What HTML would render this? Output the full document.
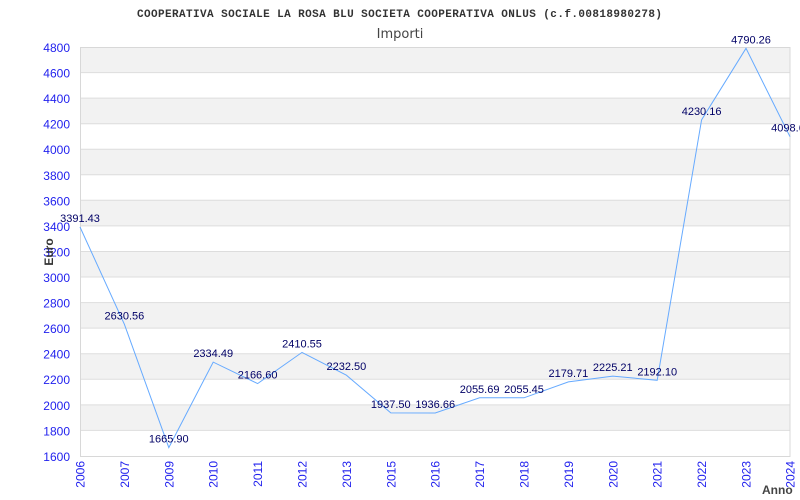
<!DOCTYPE html>
<html><head><meta charset="utf-8"><style>
html,body{margin:0;padding:0;background:#fff;width:800px;height:500px;overflow:hidden}
svg{display:block}
</style></head><body>
<svg width="800" height="500" xmlns="http://www.w3.org/2000/svg">
<text x="137" y="17" textLength="525" lengthAdjust="spacing" font-family="Liberation Mono, monospace" font-weight="bold" font-size="11" fill="#333">COOPERATIVA SOCIALE LA ROSA BLU SOCIETA COOPERATIVA ONLUS (c.f.00818980278)</text>
<text x="400" y="38" text-anchor="middle" font-family="DejaVu Sans, sans-serif" font-size="13" fill="#444">Importi</text>
<g fill="#f2f2f2">
<rect x="80" y="47" width="710" height="25.56"/>
<rect x="80" y="98.1" width="710" height="25.56"/>
<rect x="80" y="149.2" width="710" height="25.56"/>
<rect x="80" y="200.3" width="710" height="25.56"/>
<rect x="80" y="251.5" width="710" height="25.56"/>
<rect x="80" y="302.6" width="710" height="25.56"/>
<rect x="80" y="353.7" width="710" height="25.56"/>
<rect x="80" y="404.9" width="710" height="25.56"/>
</g>
<g stroke="#ddd" stroke-width="1">
<line x1="80" x2="790" y1="72.6" y2="72.6"/><line x1="80" x2="790" y1="98.1" y2="98.1"/>
<line x1="80" x2="790" y1="123.7" y2="123.7"/><line x1="80" x2="790" y1="149.2" y2="149.2"/>
<line x1="80" x2="790" y1="174.8" y2="174.8"/><line x1="80" x2="790" y1="200.3" y2="200.3"/>
<line x1="80" x2="790" y1="225.9" y2="225.9"/><line x1="80" x2="790" y1="251.5" y2="251.5"/>
<line x1="80" x2="790" y1="277" y2="277"/><line x1="80" x2="790" y1="302.6" y2="302.6"/>
<line x1="80" x2="790" y1="328.1" y2="328.1"/><line x1="80" x2="790" y1="353.7" y2="353.7"/>
<line x1="80" x2="790" y1="379.2" y2="379.2"/><line x1="80" x2="790" y1="404.9" y2="404.9"/>
<line x1="80" x2="790" y1="430.4" y2="430.4"/>
</g>
<rect x="80.5" y="47.5" width="709.5" height="409" fill="none" stroke="#d8d8d8"/>
<g font-family="Liberation Sans, sans-serif" font-size="12" fill="#2222ee" text-anchor="end">
<text x="70" y="52">4800</text><text x="70" y="77.6">4600</text><text x="70" y="103.1">4400</text>
<text x="70" y="128.7">4200</text><text x="70" y="154.2">4000</text><text x="70" y="179.8">3800</text>
<text x="70" y="205.3">3600</text><text x="70" y="230.9">3400</text><text x="70" y="256.5">3200</text>
<text x="70" y="282">3000</text><text x="70" y="307.6">2800</text><text x="70" y="333.1">2600</text>
<text x="70" y="358.7">2400</text><text x="70" y="384.2">2200</text><text x="70" y="409.9">2000</text>
<text x="70" y="435.4">1800</text><text x="70" y="461">1600</text>
</g>
<text transform="translate(53,252) rotate(-90)" text-anchor="middle" font-family="Liberation Sans, sans-serif" font-weight="bold" font-size="12" fill="#333">Euro</text>
<g font-family="Liberation Sans, sans-serif" font-size="12" fill="#2222ee" text-anchor="end">
<text transform="translate(84.5,461) rotate(-90)">2006</text>
<text transform="translate(128.9,461) rotate(-90)">2007</text>
<text transform="translate(173.3,461) rotate(-90)">2009</text>
<text transform="translate(217.7,461) rotate(-90)">2010</text>
<text transform="translate(262.1,461) rotate(-90)">2011</text>
<text transform="translate(306.5,461) rotate(-90)">2012</text>
<text transform="translate(350.9,461) rotate(-90)">2013</text>
<text transform="translate(395.3,461) rotate(-90)">2015</text>
<text transform="translate(439.7,461) rotate(-90)">2016</text>
<text transform="translate(484.1,461) rotate(-90)">2017</text>
<text transform="translate(528.5,461) rotate(-90)">2018</text>
<text transform="translate(572.9,461) rotate(-90)">2019</text>
<text transform="translate(617.3,461) rotate(-90)">2020</text>
<text transform="translate(661.7,461) rotate(-90)">2021</text>
<text transform="translate(706.1,461) rotate(-90)">2022</text>
<text transform="translate(750.5,461) rotate(-90)">2023</text>
<text transform="translate(794.5,461) rotate(-90)">2024</text>
</g>
<text x="762" y="494" font-family="Liberation Sans, sans-serif" font-weight="bold" font-size="12" fill="#444">Anno</text>
<polyline fill="none" stroke="#66aaff" stroke-width="1" points="80,227 124.4,324.3 168.8,447.6 213.2,362.1 257.6,383.6 302,352.4 346.4,375.2 390.8,412.9 435.2,413 479.6,397.8 524,397.8 568.4,381.9 612.8,376.1 657.2,380.3 701.6,119.8 746,48.3 790,136.7"/>
<g font-family="Liberation Sans, sans-serif" font-size="11" fill="#000066" text-anchor="middle">
<text x="80" y="222">3391.43</text><text x="124.4" y="319.3">2630.56</text>
<text x="168.8" y="442.6">1665.90</text><text x="213.2" y="357.1">2334.49</text>
<text x="257.6" y="378.6">2166.60</text><text x="302" y="347.4">2410.55</text>
<text x="346.4" y="370.2">2232.50</text><text x="390.8" y="407.9">1937.50</text>
<text x="435.2" y="408">1936.66</text><text x="479.6" y="392.8">2055.69</text>
<text x="524" y="392.8">2055.45</text><text x="568.4" y="376.9">2179.71</text>
<text x="612.8" y="371.1">2225.21</text><text x="657.2" y="375.3">2192.10</text>
<text x="701.6" y="114.8">4230.16</text><text x="751" y="43.3">4790.26</text>
<text x="788" y="131.7">4098.6</text>
</g>
</svg>
</body></html>
